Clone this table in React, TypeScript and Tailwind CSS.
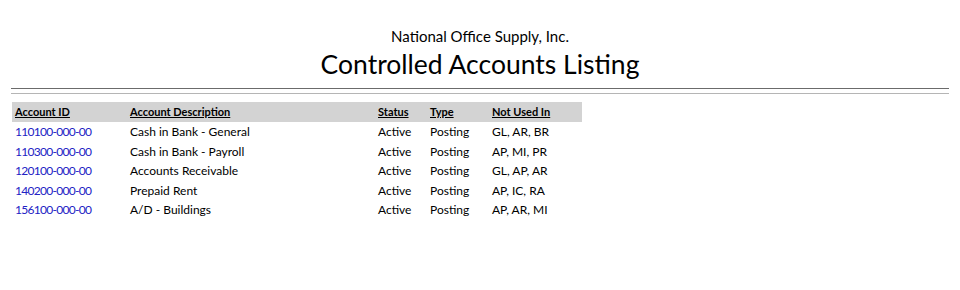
import React from 'react'

interface AccountRow {
  id: string
  description: string
  status: string
  type: string
  notUsedIn: string
}

const rows: AccountRow[] = [
  { id: '110100-000-00', description: 'Cash in Bank - General', status: 'Active', type: 'Posting', notUsedIn: 'GL, AR, BR' },
  { id: '110300-000-00', description: 'Cash in Bank - Payroll', status: 'Active', type: 'Posting', notUsedIn: 'AP, MI, PR' },
  { id: '120100-000-00', description: 'Accounts Receivable', status: 'Active', type: 'Posting', notUsedIn: 'GL, AP, AR' },
  { id: '140200-000-00', description: 'Prepaid Rent', status: 'Active', type: 'Posting', notUsedIn: 'AP, IC, RA' },
  { id: '156100-000-00', description: 'A/D - Buildings', status: 'Active', type: 'Posting', notUsedIn: 'AP, AR, MI' },
]

export default function App() {
  return (
    <div className="w-[960px] h-[290px] bg-white text-black font-['Lato',sans-serif]">
      {/* Report heading */}
      <div className="pt-[26px] text-center">
        <div className="text-[15px] leading-[20px]">National Office Supply, Inc.</div>
        <div className="text-[26.5px] leading-[36px]">Controlled Accounts Listing</div>
      </div>

      {/* Double rule */}
      <div className="mx-[11px] mt-[6px] border-t border-[#6b6b6b]" />
      <div className="mx-[11px] mt-[4px] border-t border-[#b5b5b5]" />

      {/* Listing */}
      <table className="ml-[12px] mt-[8px] w-[570px] table-fixed border-collapse text-[12px]">
        <colgroup>
          <col className="w-[115px]" />
          <col className="w-[248px]" />
          <col className="w-[52px]" />
          <col className="w-[62px]" />
          <col />
        </colgroup>
        <thead>
          <tr className="bg-[#d3d3d3] h-[20px] text-left text-[11px] font-bold">
            <th className="pl-[3px] underline">Account ID</th>
            <th className="pl-[3px] underline">Account Description</th>
            <th className="pl-[3px] underline">Status</th>
            <th className="pl-[3px] underline">Type</th>
            <th className="pl-[3px] underline">Not Used In</th>
          </tr>
        </thead>
        <tbody className="leading-[15px]">
          {rows.map((row) => (
            <tr key={row.id}>
              <td className="pl-[3px] pt-[2px] pb-[2.5px] text-[#2222c4] tracking-[-0.7px]">{row.id}</td>
              <td className="pl-[3px] pt-[2px] pb-[2.5px]">{row.description}</td>
              <td className="pl-[3px] pt-[2px] pb-[2.5px]">{row.status}</td>
              <td className="pl-[3px] pt-[2px] pb-[2.5px]">{row.type}</td>
              <td className="pl-[3px] pt-[2px] pb-[2.5px]">{row.notUsedIn}</td>
            </tr>
          ))}
        </tbody>
      </table>
    </div>
  )
}
